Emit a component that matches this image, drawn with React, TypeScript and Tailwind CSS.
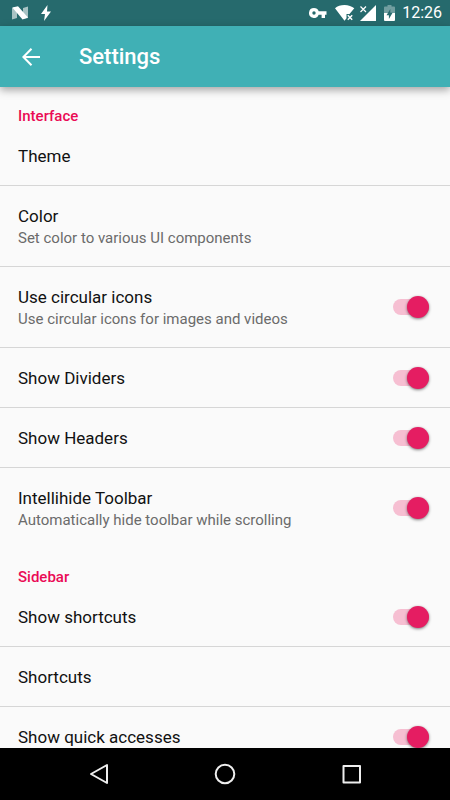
import { useState } from "react"

type Setting = {
  title: string
  summary?: string
  toggle?: boolean
}

const sections: { name: string; items: Setting[] }[] = [
  {
    name: "Interface",
    items: [
      { title: "Theme" },
      { title: "Color", summary: "Set color to various UI components" },
      { title: "Use circular icons", summary: "Use circular icons for images and videos", toggle: true },
      { title: "Show Dividers", toggle: true },
      { title: "Show Headers", toggle: true },
      { title: "Intellihide Toolbar", summary: "Automatically hide toolbar while scrolling", toggle: true },
    ],
  },
  {
    name: "Sidebar",
    items: [
      { title: "Show shortcuts", toggle: true },
      { title: "Shortcuts" },
      { title: "Show quick accesses", toggle: true },
    ],
  },
]

function StatusBar() {
  return (
    <div className="flex h-[26px] shrink-0 items-center justify-between bg-[#266a6d] pl-3 pr-2 text-white">
      <div className="flex items-center gap-3">
        <svg width="17" height="14" viewBox="0 0 17 14" fill="currentColor">
          <path d="M0 2 5 1v11l-5 1.500zM11 2l5-1.500v11.500L11 13z" opacity=".6" />
          <path d="M.3 1.600 6 .3 16 11.600 10.500 13.400z" />
        </svg>
        <svg width="10" height="16" viewBox="0 0 10 16" fill="currentColor">
          <path d="M6.500 0 0 9h4L3 16l7-9.500H6z" />
        </svg>
      </div>
      <div className="flex items-center">
        <svg className="mr-2" width="18" height="10" viewBox="0 0 18 10" fill="currentColor">
          <path
            fillRule="evenodd"
            d="M5 0a5 5 0 0 1 4.700 3.300H17.500v3.400H16V10h-3.400V6.700H9.700A5 5 0 1 1 5 0zm0 3.300a1.700 1.700 0 1 0 0 3.400 1.700 1.700 0 0 0 0-3.400z"
          />
        </svg>
        <svg className="mr-1" width="20" height="16" viewBox="0 0 20 16" fill="currentColor">
          <path d="M9.500 0C13.400 0 16.900 1.300 19.300 3.200L14.500 9H11.500v4.200L9.500 15.800 0 3.200C2.500 1.200 5.700 0 9.500 0z" />
          <path d="m12.800 10.300 4.400 4.400m0-4.400-4.400 4.400" stroke="currentColor" strokeWidth="1.500" />
        </svg>
        <svg className="mr-2" width="17" height="16" viewBox="0 0 17 16" fill="currentColor">
          <path d="M17 0v16H1z" />
          <path d="m1.500 1.500 5.500 5.500m0-5.500L1.500 7" stroke="currentColor" strokeWidth="1.200" />
        </svg>
        <svg className="mr-[7px]" width="11" height="16" viewBox="0 0 11 16" fill="currentColor">
          <path d="M3.500 0h4v1.600H10a1 1 0 0 1 1 1V8H0V2.600a1 1 0 0 1 1-1h2.500z" opacity=".35" />
          <path d="M0 8h11v7a1 1 0 0 1-1 1H1a1 1 0 0 1-1-1z" />
          <path d="M6.300 4 2.500 10.300h2.400v3.700l3.700-6.300H6.300z" fill="#266a6d" />
        </svg>
        <span className="text-base leading-6">12:26</span>
      </div>
    </div>
  )
}

function Toolbar() {
  return (
    <header className="relative z-10 flex h-[61px] shrink-0 items-center gap-8 bg-[#40b0b5] px-[15px] text-white shadow-[0_3px_8px_rgba(0,0,0,0.35)]">
      <button aria-label="Back" className="flex w-8 justify-center">
        <svg width="18" height="18" viewBox="0 0 18 18" fill="none" stroke="currentColor" strokeWidth="2">
          <path d="M18 9H1.500M9.500 .8 1.400 9l8.100 8.200" />
        </svg>
      </button>
      <h1 className="text-[22px] font-medium leading-8">Settings</h1>
    </header>
  )
}

function SettingText({ title, summary }: Setting) {
  return (
    <span className="flex flex-col pt-0.5">
      <span className="text-[17px] leading-[23px] text-[#111111]">{title}</span>
      {summary && <span className="text-[15px] leading-[21px] text-[#6b6b6b]">{summary}</span>}
    </span>
  )
}

function SettingRow({ item }: { item: Setting }) {
  const [on, setOn] = useState(true)

  if (!item.toggle) {
    return (
      <button className="flex w-full items-center px-[18px] py-[17px] text-left">
        <SettingText {...item} />
      </button>
    )
  }

  return (
    <label className="flex items-center justify-between py-[17px] pl-[18px] pr-[21px]">
      <SettingText {...item} />
      <input
        type="checkbox"
        role="switch"
        checked={on}
        onChange={(e) => setOn(e.target.checked)}
        className="flex h-4 w-9 shrink-0 appearance-none items-center rounded-full bg-[#c4c4c4] before:size-[22px] before:rounded-full before:bg-[#fafafa] before:shadow-[0_1px_3px_rgba(0,0,0,0.5)] checked:justify-end checked:bg-[#f6bfd2] checked:before:bg-[#e51d62]"
      />
    </label>
  )
}

function NavigationBar() {
  return (
    <nav className="flex h-[52px] shrink-0 items-center justify-center gap-[102px] bg-black text-[#eeeeee]">
      <button aria-label="Back">
        <svg width="24" height="24" viewBox="0 0 24 24" fill="none" stroke="currentColor" strokeWidth="2" strokeLinejoin="round">
          <path d="M20 3v18L4 12z" />
        </svg>
      </button>
      <button aria-label="Home">
        <svg width="24" height="24" viewBox="0 0 24 24" fill="none" stroke="currentColor" strokeWidth="2">
          <circle cx="12" cy="12" r="9.300" />
        </svg>
      </button>
      <button aria-label="Recent apps">
        <svg width="24" height="24" viewBox="0 0 24 24" fill="none" stroke="currentColor" strokeWidth="2" strokeLinejoin="round">
          <path d="M4.500 4h16.500v16.500H4.500z" />
        </svg>
      </button>
    </nav>
  )
}

export default function App() {
  return (
    <div className="flex h-screen flex-col bg-[#fafafa] font-[Roboto,sans-serif]">
      <StatusBar />
      <Toolbar />
      <main className="min-h-0 flex-1 overflow-y-auto [scrollbar-width:none]">
        {sections.map((section) => (
          <section key={section.name}>
            <h2 className="px-[18px] pt-[19px] text-[15px] font-medium leading-5 text-[#ea0a55]">{section.name}</h2>
            <ul className="divide-y divide-[#d6d6d6]">
              {section.items.map((item) => (
                <li key={item.title}>
                  <SettingRow item={item} />
                </li>
              ))}
            </ul>
          </section>
        ))}
      </main>
      <NavigationBar />
    </div>
  )
}
